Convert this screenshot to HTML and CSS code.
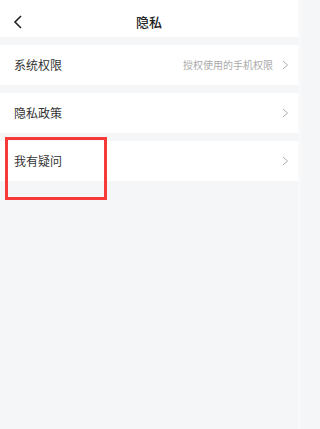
FILE: index.html
```html
<!DOCTYPE html>
<html lang="zh">
<head>
<meta charset="utf-8">
<title>隐私</title>
<link rel="stylesheet" href="styles.css">
</head>
<body>
<div class="page">
  <div class="main">
    <div class="header">
      <span class="back">
        <svg width="10" height="14" viewBox="0 0 10 14"><polyline points="8,1 2,7 8,13" fill="none" stroke="#222" stroke-width="1.6"/></svg>
      </span>
      <span class="title">隐私</span>
    </div>
    <div class="row">
      <span class="label">系统权限</span>
      <span class="right">
        <span class="hint">授权使用的手机权限</span>
        <svg class="chev" width="7" height="10" viewBox="0 0 7 10"><polyline points="1,1 5.5,5 1,9" fill="none" stroke="#aaa" stroke-width="1"/></svg>
      </span>
    </div>
    <div class="row">
      <span class="label">隐私政策</span>
      <span class="right">
        <svg class="chev" width="7" height="10" viewBox="0 0 7 10"><polyline points="1,1 5.5,5 1,9" fill="none" stroke="#aaa" stroke-width="1"/></svg>
      </span>
    </div>
    <div class="row">
      <span class="label">我有疑问</span>
      <span class="right">
        <svg class="chev" width="7" height="10" viewBox="0 0 7 10"><polyline points="1,1 5.5,5 1,9" fill="none" stroke="#aaa" stroke-width="1"/></svg>
      </span>
    </div>
    <div class="highlight"></div>
  </div>
  <div class="strip"></div>
</div>
</body>
</html>
```

FILE: styles.css
```css
html, body {
  margin: 0;
  padding: 0;
}
body {
  font-family: "Noto Sans CJK SC", "Noto Sans", sans-serif;
  background: #f5f6f8;
}
.page {
  display: flex;
  width: 301px;
  min-height: 429px;
}
.main {
  flex: 1;
  position: relative;
  background: #f5f6f8;
}
.strip {
  width: 3px;
  background: #f9f9f9;
}
.header {
  height: 37px;
  background: #fff;
  position: relative;
  display: flex;
  align-items: center;
  justify-content: center;
  padding-top: 6px;
  box-sizing: border-box;
}
.back {
  position: absolute;
  left: 13px;
  top: 15px;
  display: flex;
}
.title {
  font-size: 13px;
  font-weight: 500;
  color: #222;
  line-height: 1;
}
.row {
  margin-top: 8px;
  height: 40px;
  background: #fff;
  display: flex;
  align-items: center;
  justify-content: space-between;
  padding: 0 9px 0 14px;
}
.label {
  font-size: 12px;
  color: #333;
  line-height: 1;
}
.right {
  display: flex;
  align-items: center;
  gap: 9px;
}
.hint {
  font-size: 10px;
  color: #aaa;
  line-height: 1;
}
.chev {
  display: block;
}
.highlight {
  position: absolute;
  left: 5px;
  top: 137px;
  width: 102px;
  height: 63px;
  box-sizing: border-box;
  border: 3px solid #f63a3a;
}
```
